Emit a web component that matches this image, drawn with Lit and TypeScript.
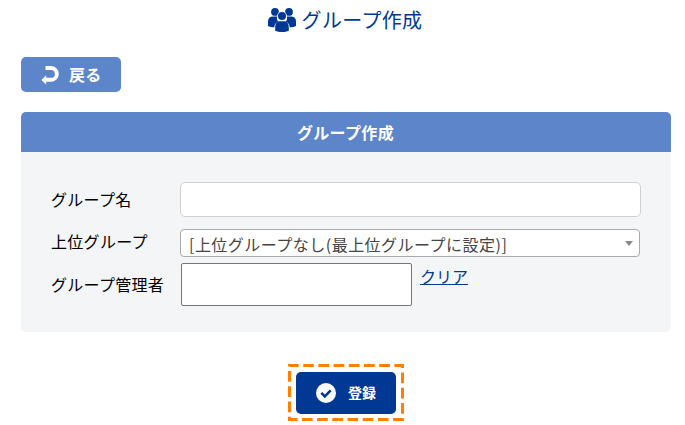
import { LitElement, html, css } from "lit";
import { customElement } from "lit/decorators.js";

@customElement("app-root")
export class AppRoot extends LitElement {
  static styles = css`
    :host {
      display: flex;
      flex-direction: column;
      box-sizing: border-box;
      width: 685px;
      height: 425px;
      padding: 0 14px 0 21px;
      overflow: hidden;
      background: #fff;
      color: #000;
      font: 16px/24px "Noto Sans CJK JP", sans-serif;
    }
    * { box-sizing: border-box; }
    svg { display: block; flex: none; }
    .title {
      display: flex;
      align-items: center;
      justify-content: center;
      height: 40px;
      margin: 0 2px 17px 0;
      gap: 6px;
      color: #003894;
      font-size: 20px;
      font-weight: 400;
      letter-spacing: 0.35px;
    }
    .back {
      display: flex;
      align-items: center;
      width: 100px;
      height: 35px;
      padding: 0 0 0 20px;
      gap: 10px;
      border: 0;
      border-radius: 5px;
      background: #5d86ca;
      color: #fff;
      font: bold 16px/24px "Noto Sans CJK JP", sans-serif;
      letter-spacing: 0.3px;
    }
    .back span, .submit span { padding-bottom: 2px; }
    .panel {
      height: 220px;
      margin-top: 20px;
      border-radius: 5px;
      overflow: hidden;
      background: #f3f5f7;
    }
    .head {
      height: 40px;
      margin: 0;
      padding-right: 1px;
      background: #5d86ca;
      color: #fff;
      font-size: 16px;
      line-height: 40px;
      text-align: center;
      letter-spacing: 0.35px;
    }
    .form {
      display: grid;
      grid-template-columns: 129px 461px;
      grid-template-rows: 35px 12px 28px 6px 43px;
      padding: 30px 30px 0;
      align-items: center;
    }
    .label {
      grid-column: 1;
      padding-bottom: 2px;
      white-space: nowrap;
      letter-spacing: 0.3px;
    }
    .label.r2 { padding-bottom: 4px; }
    .r1 { grid-row: 1; }
    .r2 { grid-row: 3; }
    .r3 { grid-row: 5; }
    .field { grid-column: 2; }
    .name {
      width: 461px;
      height: 35px;
      border: 1px solid #d0d0d0;
      border-radius: 5px;
      background: #fff;
    }
    .select {
      display: flex;
      align-items: center;
      justify-content: space-between;
      width: 460px;
      height: 28px;
      padding: 2px 6px 0 8px;
      border: 1px solid #aaa;
      border-radius: 4px;
      background: #fff;
      color: #444;
      letter-spacing: 0.48px;
    }
    .arrow {
      border: 4px solid transparent;
      border-top: 5px solid #888;
      border-bottom: 0;
      margin-top: -2px;
    }
    .admin { display: flex; align-items: flex-start; gap: 8px; padding-left: 1px; }
    .box {
      width: 231px;
      height: 43px;
      border: 1px solid #767676;
      border-radius: 2px;
      background: #fff;
    }
    .clear { margin-top: 1px; color: #003894; text-decoration: underline; }
    .submit-wrap {
      display: grid;
      align-self: center;
      margin: 32px 0 0;
      width: 116px;
      height: 57px;
      place-items: center;
    }
    .submit-wrap > * { grid-area: 1 / 1; }
    .submit {
      display: flex;
      align-items: center;
      width: 100px;
      height: 42px;
      padding: 0 0 0 20px;
      gap: 12px;
      border: 0;
      border-radius: 5px;
      background: #003894;
      color: #fff;
      font: bold 14px/20px "Noto Sans CJK JP", sans-serif;
    }
  `;

  render() {
    return html`
      <h1 class="title">
        <svg width="28" height="24" viewBox="0 0 28 24" fill="#003894">
          <circle cx="7" cy="3.900" r="3.900" />
          <circle cx="21" cy="3.900" r="3.900" />
          <path d="M0 18v-4.500C0 10.300 2 8.600 5 8.600h4.300c-.9 2.300-.2 4.100 1.200 5.100-2.700.8-4 2.600-4.200 5.600C3.500 19.300 1.500 19 0 18z" />
          <path d="M28 18v-4.500c0-3.200-2-4.900-5-4.900h-4.300c.9 2.300.2 4.100-1.200 5.100 2.700.8 4 2.600 4.200 5.600 2.800 0 4.800-.3 6.300-1.300z" />
          <circle cx="14" cy="8.100" r="4.900" fill="#fff" />
          <circle cx="14" cy="8.100" r="4" />
          <path d="M7.200 22.700v-3.200c0-4 1.800-6.200 5-6.200h3.600c3.200 0 5 2.200 5 6.200v3.200c-3.500 1.700-10.100 1.700-13.600 0z" />
        </svg>
        <span>グループ作成</span>
      </h1>
      <button class="back">
        <svg width="18" height="20" viewBox="0 0 18 20">
          <path d="M4.500 3h5.400a5.900 5.900 0 0 1 0 11.800H4" fill="none" stroke="#fff" stroke-width="3.900" />
          <path d="M0.300 14.900l4.900-4.600v9.200z" fill="#fff" />
        </svg>
        <span>戻る</span>
      </button>
      <section class="panel">
        <h2 class="head">グループ作成</h2>
        <div class="form">
          <span class="label r1">グループ名</span>
          <div class="field r1 name"></div>
          <span class="label r2">上位グループ</span>
          <div class="field r2 select">
            <span>[上位グループなし(最上位グループに設定)]</span><i class="arrow"></i>
          </div>
          <span class="label r3">グループ管理者</span>
          <div class="field r3 admin">
            <div class="box"></div>
            <a class="clear">クリア</a>
          </div>
        </div>
      </section>
      <div class="submit-wrap">
        <svg width="116" height="57" viewBox="0 0 116 57" fill="none" stroke="#ff8000" stroke-width="3">
          <path d="M1.500 1.500H114.500V55.500H1.500Z" stroke-dasharray="10.700 4.500" stroke-dashoffset="1.500" />
        </svg>
        <button class="submit">
          <svg width="20" height="20" viewBox="0 0 20 20">
            <circle cx="10" cy="10" r="10" fill="#fff" />
            <path d="M5.300 9.800l3.500 3.500 5.900-5.900" fill="none" stroke="#003894" stroke-width="2.600" />
          </svg>
          <span>登録</span>
        </button>
      </div>
    `;
  }
}
